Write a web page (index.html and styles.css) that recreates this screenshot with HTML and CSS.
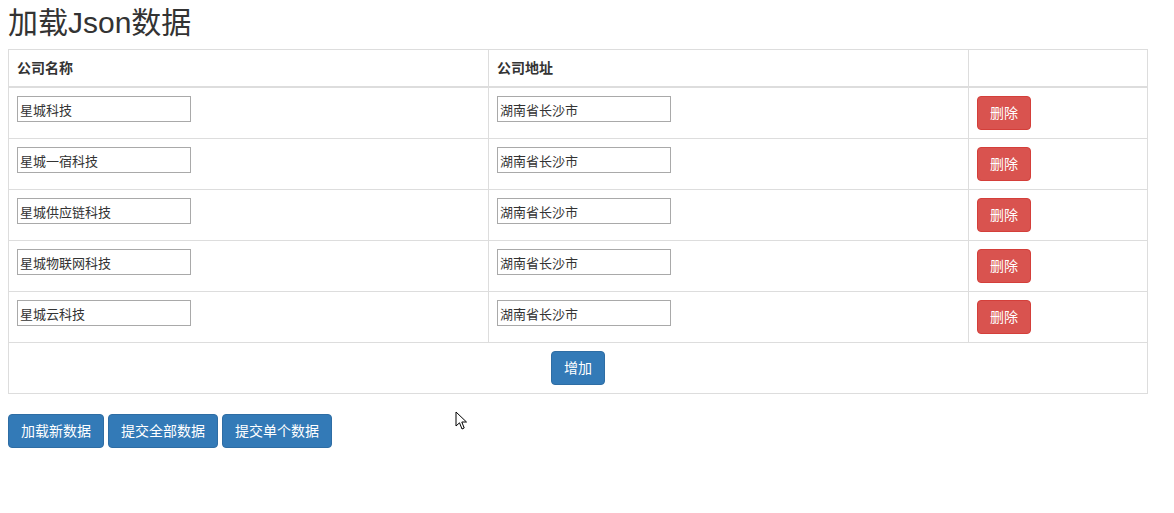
FILE: index.html
```html
<!DOCTYPE html>
<html lang="zh-CN">
<head>
    <meta charset="UTF-8">
    <title>加载Json数据</title>
    <link rel="stylesheet" href="styles.css">
</head>
<body>

<h2 class="title">加载Json数据</h2>

<table class="company-table">
    <colgroup>
        <col class="col-name">
        <col class="col-addr">
        <col class="col-op">
    </colgroup>
    <thead>
        <tr>
            <th>公司名称</th>
            <th>公司地址</th>
            <th></th>
        </tr>
    </thead>
    <tbody>
        <tr>
            <td><input type="text" value="星城科技"></td>
            <td><input type="text" value="湖南省长沙市"></td>
            <td><button class="btn btn-danger">删除</button></td>
        </tr>
        <tr>
            <td><input type="text" value="星城一宿科技"></td>
            <td><input type="text" value="湖南省长沙市"></td>
            <td><button class="btn btn-danger">删除</button></td>
        </tr>
        <tr>
            <td><input type="text" value="星城供应链科技"></td>
            <td><input type="text" value="湖南省长沙市"></td>
            <td><button class="btn btn-danger">删除</button></td>
        </tr>
        <tr>
            <td><input type="text" value="星城物联网科技"></td>
            <td><input type="text" value="湖南省长沙市"></td>
            <td><button class="btn btn-danger">删除</button></td>
        </tr>
        <tr>
            <td><input type="text" value="星城云科技"></td>
            <td><input type="text" value="湖南省长沙市"></td>
            <td><button class="btn btn-danger">删除</button></td>
        </tr>
        <tr>
            <td colspan="3" class="add-cell"><button class="btn btn-primary">增加</button></td>
        </tr>
    </tbody>
</table>

<div class="actions">
    <button class="btn btn-primary">加载新数据</button>
    <button class="btn btn-primary">提交全部数据</button>
    <button class="btn btn-primary">提交单个数据</button>
</div>

<!-- 鼠标指针 -->
<svg class="cursor" width="14" height="20" viewBox="0 0 14 20">
    <path d="M1 1 L1 15 L4.5 11.8 L7 18 L9.2 17 L6.8 11 L11.5 11 Z" fill="#fff" stroke="#000" stroke-width="1" stroke-linejoin="round"/>
</svg>

</body>
</html>
```

FILE: styles.css
```css
* {
    box-sizing: border-box;
}

body {
    margin: 8px;
    font-family: "Liberation Sans", "Noto Sans CJK SC", sans-serif;
    font-size: 14px;
    line-height: 1.42857;
    color: #333;
    background-color: #fff;
    position: relative;
}

.title {
    margin: -2px 0 10px;
    font-size: 30px;
    font-weight: normal;
    line-height: 1.1;
}

.company-table {
    width: 1140px;
    table-layout: fixed;
    border-collapse: collapse;
    border-spacing: 0;
    margin-bottom: 20px;
}

.col-name,
.col-addr {
    width: 480px;
}

.col-op {
    width: 179px;
}

.company-table th,
.company-table td {
    padding: 8px;
    border: 1px solid #ddd;
    text-align: left;
    vertical-align: top;
    line-height: 20px;
}

.company-table th {
    font-weight: bold;
    border-bottom: 2px solid #ddd;
}

.company-table input {
    display: block;
    width: 174px;
    height: 26px;
    padding: 1px 2px;
    border: 1px solid #a9a9a9;
    font-family: "Liberation Sans", "Noto Sans CJK SC", sans-serif;
    font-size: 13px;
    color: #333;
    background: #fff;
}

.company-table .add-cell {
    text-align: center;
}

.btn {
    display: inline-block;
    padding: 6px 12px;
    font-family: "Liberation Sans", "Noto Sans CJK SC", sans-serif;
    font-size: 14px;
    line-height: 20px;
    color: #fff;
    border: 1px solid transparent;
    border-radius: 4px;
    cursor: pointer;
}

.btn-danger {
    background-color: #d9534f;
    border-color: #d43f3a;
}

.btn-primary {
    background-color: #337ab7;
    border-color: #2e6da4;
}

.actions {
    display: flex;
    gap: 4px;
}

.cursor {
    position: absolute;
    left: 447px;
    top: 403px;
}
```
